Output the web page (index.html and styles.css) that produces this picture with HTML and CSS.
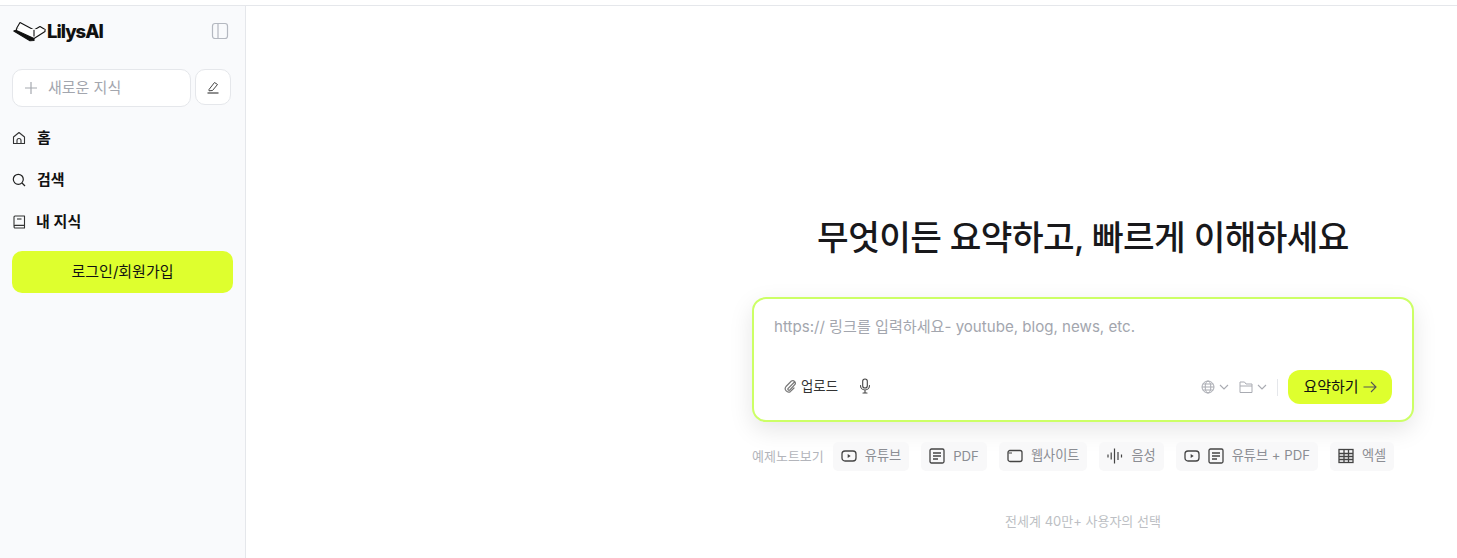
FILE: index.html
```html
<!DOCTYPE html>
<html lang="ko">
<head>
    <meta charset="UTF-8">
    <meta name="viewport" content="width=device-width, initial-scale=1.0">
    <title>LilysAI</title>
    <link rel="stylesheet" href="styles.css">
</head>
<body>
    <div class="top-strip"></div>
    <div class="app">
        <aside class="sidebar">
            <div class="brand-row">
                <div class="brand">
                    <svg class="brand-icon" width="33" height="21" viewBox="0 0 33 21" fill="none" stroke="#111" stroke-width="1.1" stroke-linejoin="round">
                        <path d="M0.8 10 L17 19.8 L21 19.5 L21 17.5 L3.5 9 Z" fill="#111"/>
                        <path d="M3.5 7.5 L7 1.5 L21 9 L27 5.5 L32 8.5 L21 15.5 Z" fill="#fff"/>
                        <path d="M3.5 7.5 L3.5 9.5 L21 17.5 L32 10.5 L32 8.5 M21 9 L21 15.5" fill="#fff"/>
                    </svg>
                    <span class="brand-name">LilysAI</span>
                </div>
                <svg width="18" height="18" viewBox="0 0 18 18" fill="none" stroke="#b4b8c0" stroke-width="1.2">
                    <rect x="1.5" y="1.5" width="15" height="15" rx="2.5"/>
                    <path d="M7 1.5 V16.5"/>
                </svg>
            </div>
            <div class="new-row">
                <div class="new-input">
                    <svg width="14" height="14" viewBox="0 0 14 14" stroke="#a6a9b0" stroke-width="1.2" fill="none">
                        <path d="M7 1 V13 M1 7 H13"/>
                    </svg>
                    <span class="raise">새로운 지식</span>
                </div>
                <button class="edit-btn">
                    <svg width="14" height="14" viewBox="0 0 14 14" fill="none" stroke="#444" stroke-width="1" stroke-linejoin="round">
                        <path d="M3 9.5 L8.5 2.5 L11.5 4.5 L6.5 10.5 L3 10.8 Z"/>
                        <path d="M1.5 13 H12.5" stroke-width="1.2"/>
                    </svg>
                </button>
            </div>
            <nav class="nav">
                <a class="nav-item">
                    <svg width="14" height="14" viewBox="0 0 14 14" fill="none" stroke="#333" stroke-width="1.1" stroke-linejoin="round">
                        <path d="M1.5 6 L7 1.5 L12.5 6 V12.5 H1.5 Z"/>
                        <path d="M5 12.5 V9.5 A2 2 0 0 1 9 9.5 V12.5"/>
                    </svg>
                    <span class="raise">홈</span>
                </a>
                <a class="nav-item">
                    <svg width="14" height="14" viewBox="0 0 14 14" fill="none" stroke="#222" stroke-width="1.2">
                        <circle cx="6.3" cy="6.3" r="5"/>
                        <path d="M10 10 L13 13"/>
                    </svg>
                    <span class="raise">검색</span>
                </a>
                <a class="nav-item nav-book">
                    <svg width="14" height="14" viewBox="0 0 14 14" fill="none" stroke="#333" stroke-width="1.1" stroke-linejoin="round">
                        <path d="M2 11 V2 A1 1 0 0 1 3 1 H12.5 V13 H3.2 A1.3 1.3 0 0 1 2 11.6 A1.3 1.3 0 0 1 3.2 10.4 H12.5"/>
                        <path d="M5 4 H9.5"/>
                    </svg>
                    <span class="raise">내 지식</span>
                </a>
            </nav>
            <button class="login-btn">로그인/회원가입</button>
        </aside>
        <main class="main">
            <div class="center">
                <h1>무엇이든 요약하고, 빠르게 이해하세요</h1>
                <div class="card">
                    <div class="placeholder">https:// 링크를 입력하세요- youtube, blog, news, etc.</div>
                    <div class="card-bar">
                        <div class="bar-left">
                            <div class="upload">
                                <svg width="14" height="14" viewBox="0 0 14 14" fill="none" stroke="#777" stroke-width="1.2" stroke-linecap="round">
                                    <path d="M11.5 3 L5 9.5 A1.2 1.2 0 0 0 6.8 11 L12 5.5 A2.6 2.6 0 0 0 8.4 2 L3 7.5 A3.4 3.4 0 0 0 7.6 12.4 L11 9"/>
                                </svg>
                                <span class="raise">업로드</span>
                            </div>
                            <svg width="14" height="16" viewBox="0 0 14 16" fill="none" stroke="#444" stroke-width="1.1" stroke-linecap="round">
                                <rect x="4.7" y="1" width="4.6" height="9" rx="2.3"/>
                                <path d="M2.5 7.5 A4.5 4.5 0 0 0 11.5 7.5 M7 12 V15 M5 15 H9"/>
                            </svg>
                        </div>
                        <div class="bar-right">
                            <div class="select">
                                <svg width="14" height="14" viewBox="0 0 14 14" fill="none" stroke="#a9abb2" stroke-width="1">
                                    <circle cx="7" cy="7" r="6"/>
                                    <ellipse cx="7" cy="7" rx="2.8" ry="6"/>
                                    <path d="M1 7 H13 M1.8 4 H12.2 M1.8 10 H12.2"/>
                                </svg>
                                <svg class="chev" width="10" height="6" viewBox="0 0 10 6" fill="none" stroke="#a9abb2" stroke-width="1.1">
                                    <path d="M1 1 L5 5 L9 1"/>
                                </svg>
                            </div>
                            <div class="select">
                                <svg width="14" height="14" viewBox="0 0 14 14" fill="none" stroke="#a9abb2" stroke-width="1">
                                    <path d="M1 2 H5.5 L7 4 H13 V12.5 H1 Z"/>
                                    <path d="M1 6 H13"/>
                                </svg>
                                <svg class="chev" width="10" height="6" viewBox="0 0 10 6" fill="none" stroke="#a9abb2" stroke-width="1.1">
                                    <path d="M1 1 L5 5 L9 1"/>
                                </svg>
                            </div>
                            <div class="divider"></div>
                            <button class="submit-btn">
                                <span class="raise">요약하기</span>
                                <svg width="14" height="12" viewBox="0 0 14 12" fill="none" stroke="#555" stroke-width="1.1">
                                    <path d="M0.5 6 H13 M8 1 L13 6 L8 11"/>
                                </svg>
                            </button>
                        </div>
                    </div>
                </div>
                <div class="examples">
                    <span class="examples-label raise">예제노트보기</span>
                    <div class="chip">
                        <svg width="16" height="16" viewBox="0 0 16 16" fill="none" stroke="#444" stroke-width="1.3">
                            <rect x="1" y="3" width="14" height="10" rx="3"/>
                            <path d="M6.7 6 L9.7 8 L6.7 10 Z" fill="#444" stroke="none"/>
                        </svg>
                        <span class="raise">유튜브</span>
                    </div>
                    <div class="chip">
                        <svg width="16" height="16" viewBox="0 0 16 16" fill="none" stroke="#444" stroke-width="1.3">
                            <rect x="1" y="1" width="14" height="14" rx="1.5"/>
                            <path d="M4 5 H12 M4 8 H12 M4 11 H9"/>
                        </svg>
                        <span>PDF</span>
                    </div>
                    <div class="chip">
                        <svg width="16" height="16" viewBox="0 0 16 16" fill="none" stroke="#444" stroke-width="1.3">
                            <rect x="1" y="2.5" width="14" height="11" rx="2"/>
                            <path d="M1.5 5 H5" stroke-width="1"/>
                        </svg>
                        <span class="raise">웹사이트</span>
                    </div>
                    <div class="chip">
                        <svg width="16" height="16" viewBox="0 0 16 16" fill="none" stroke="#444" stroke-width="1.2">
                            <path d="M1 6.5 V9.5 M4.2 4.5 V11.5 M7.5 0.5 V15.5 M11 4 V12 M14.5 6.5 V9.5"/>
                        </svg>
                        <span class="raise">음성</span>
                    </div>
                    <div class="chip">
                        <svg width="16" height="16" viewBox="0 0 16 16" fill="none" stroke="#444" stroke-width="1.3">
                            <rect x="1" y="3" width="14" height="10" rx="3"/>
                            <path d="M6.7 6 L9.7 8 L6.7 10 Z" fill="#444" stroke="none"/>
                        </svg>
                        <svg width="16" height="16" viewBox="0 0 16 16" fill="none" stroke="#444" stroke-width="1.3">
                            <rect x="1" y="1" width="14" height="14" rx="1.5"/>
                            <path d="M4 5 H12 M4 8 H12 M4 11 H9"/>
                        </svg>
                        <span class="raise">유튜브 + PDF</span>
                    </div>
                    <div class="chip">
                        <svg width="16" height="16" viewBox="0 0 16 16" fill="none" stroke="#444" stroke-width="1.3">
                            <rect x="1" y="1.5" width="14" height="13"/>
                            <path d="M1 5.5 H15 M1 8.5 H15 M1 11.5 H15 M6 1.5 V14.5 M10.5 1.5 V14.5"/>
                        </svg>
                        <span class="raise">엑셀</span>
                    </div>
                </div>
                <p class="footnote">전세계 40만+ 사용자의 선택</p>
            </div>
        </main>
    </div>
</body>
</html>
```
FILE: styles.css
```css
:root {
    --lime: #deff2e;
    --lime-border: #ccff66;
    --sidebar-bg: #f9fafc;
    --line: #e5e7eb;
    --muted: #a3a6ae;
    --chip-text: #8b8d93;
}

* {
    margin: 0;
    padding: 0;
    box-sizing: border-box;
}

html, body {
    height: 100%;
    overflow: hidden;
}

body {
    font-family: Inter, "Noto Sans CJK KR", sans-serif;
    background: #fff;
    color: #111;
    display: flex;
    flex-direction: column;
}

/* CJK glyphs sit low in their line box, nudge them back up */
.raise {
    padding-bottom: 3px;
}

.top-strip {
    height: 6px;
    flex: none;
    border-bottom: 1px solid var(--line);
}

.app {
    flex: 1;
    display: flex;
    min-height: 0;
}

.sidebar {
    width: 246px;
    flex: none;
    background: var(--sidebar-bg);
    border-right: 1px solid var(--line);
    padding: 15px 12px 0;
}

.brand-row {
    display: flex;
    align-items: center;
    justify-content: space-between;
    padding: 0 4px 0 1px;
    height: 20px;
}

.brand {
    display: flex;
    align-items: center;
}

.brand-name {
    font-size: 18.5px;
    font-weight: 800;
    letter-spacing: -1px;
    margin-left: 1px;
}

.new-row {
    display: flex;
    gap: 4px;
    margin-top: 28px;
    padding-right: 2px;
}

.new-input {
    flex: 1;
    height: 38px;
    background: #fff;
    border: 1px solid var(--line);
    border-radius: 10px;
    display: flex;
    align-items: center;
    gap: 10px;
    padding-left: 11px;
    font-size: 15px;
    color: var(--muted);
}

.edit-btn {
    width: 36px;
    height: 36px;
    background: #fff;
    border: 1px solid var(--line);
    border-radius: 10px;
    display: flex;
    align-items: center;
    justify-content: center;
}

.nav {
    margin-top: 10px;
}

.nav-item {
    height: 42px;
    display: flex;
    align-items: center;
    gap: 11px;
    font-size: 15px;
    font-weight: 600;
    color: #111;
}

.nav-book {
    gap: 10px;
}

.login-btn {
    width: 221px;
    height: 42px;
    margin-top: 8px;
    padding-bottom: 3px;
    background: var(--lime);
    border: none;
    border-radius: 10px;
    font: inherit;
    font-size: 15px;
    color: #111;
}

.main {
    flex: 1;
    display: flex;
    justify-content: flex-end;
    padding-right: 43px;
}

.center {
    width: 662px;
    padding-top: 207px;
}

h1 {
    font-size: 34.4px;
    font-weight: 500;
    line-height: 50px;
    text-align: center;
    letter-spacing: -0.6px;
    color: #18181b;
}

.card {
    height: 125px;
    margin-top: 34px;
    background: #fff;
    border: 2px solid var(--lime-border);
    border-radius: 14px;
    box-shadow: 0 8px 24px rgba(0, 0, 0, 0.1);
    padding: 17px 20px 16px;
    display: flex;
    flex-direction: column;
    justify-content: space-between;
}

.placeholder {
    font-size: 15.1px;
    line-height: 22px;
    color: var(--muted);
}

.card-bar {
    display: flex;
    align-items: center;
    justify-content: space-between;
}

.bar-left {
    display: flex;
    align-items: center;
    gap: 20px;
    padding-left: 9px;
    padding-bottom: 2px;
}

.upload {
    display: flex;
    align-items: center;
    gap: 4px;
    font-size: 13.4px;
    color: #333;
}

.bar-right {
    display: flex;
    align-items: center;
}

.select {
    display: flex;
    align-items: center;
    gap: 4px;
    margin-right: 10px;
}

.divider {
    width: 1px;
    height: 17px;
    background: var(--line);
    margin-right: 10px;
}

.submit-btn {
    width: 104px;
    height: 34px;
    background: var(--lime);
    border: none;
    border-radius: 12px;
    font: inherit;
    font-size: 15px;
    color: #111;
    display: flex;
    align-items: center;
    justify-content: center;
    gap: 4px;
}

.examples {
    display: flex;
    align-items: center;
    gap: 12px;
    margin-top: 20px;
}

.examples-label {
    font-size: 13px;
    color: #b3b5bb;
    margin-right: -3px;
}

.chip {
    height: 29px;
    padding: 0 8px 1px;
    background: #f8f8f9;
    border-radius: 5px;
    display: flex;
    align-items: center;
    gap: 8px;
    font-size: 13.2px;
    color: var(--chip-text);
}

.footnote {
    margin-top: 40px;
    text-align: center;
    font-size: 13px;
    color: #bdbfc4;
}
```
